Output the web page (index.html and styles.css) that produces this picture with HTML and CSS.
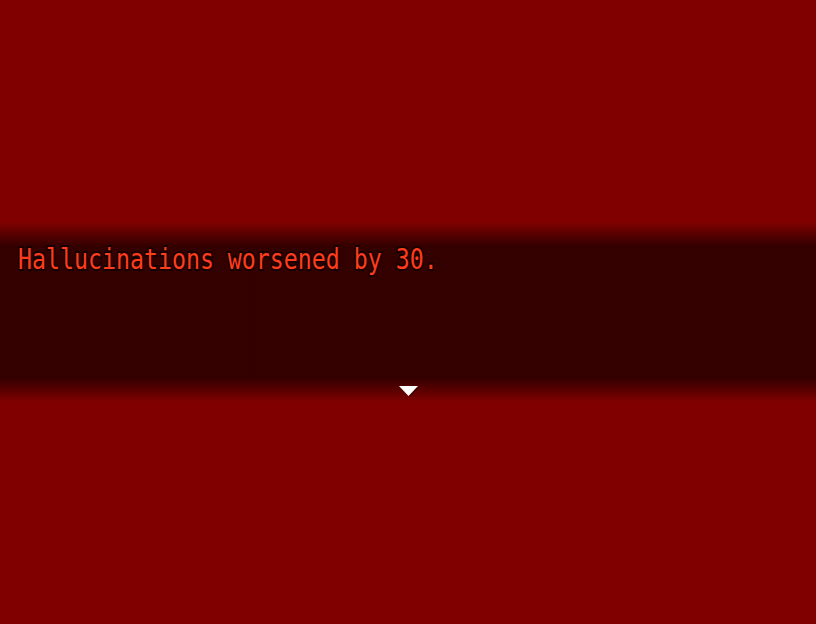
FILE: index.html
```html
<!DOCTYPE html>
<html>
<head>
<meta charset="utf-8">
<link rel="stylesheet" href="styles.css">
</head>
<body>
<div class="screen">
  <div class="message-window">
    <div class="message-text"><span class="line">Hallucinations worsened by 30.</span></div>
    <svg class="pause-sign" width="24" height="14" viewBox="0 0 24 14">
      <polygon points="3,2 22,2 13,12" fill="rgba(0,0,0,0.35)"/>
      <polygon points="2,1 21,1 11.5,11" fill="#ffffff"/>
    </svg>
  </div>
</div>
</body>
</html>
```
FILE: styles.css
```css
html, body {
  margin: 0;
  padding: 0;
}
body {
  width: 816px;
  height: 624px;
  overflow: hidden;
  background: #800000;
}
.screen {
  width: 816px;
  height: 624px;
  display: flex;
  flex-direction: column;
  justify-content: center;
}
.message-window {
  position: relative;
  height: 180px;
  box-sizing: border-box;
  padding: 20px 18px 18px;
  background: linear-gradient(to bottom,
    rgba(0,0,0,0) 0px,
    rgba(0,0,0,0.6) 24px,
    rgba(0,0,0,0.6) calc(100% - 24px),
    rgba(0,0,0,0) 100%);
}
.message-text {
  font-family: "DejaVu Sans Mono", monospace;
  font-size: 28px;
  line-height: 36px;
  color: #ff3c1c;
  white-space: pre;
}
.line {
  display: inline-block;
  transform: scaleX(0.83);
  transform-origin: 0 0;
  -webkit-text-stroke: 4px rgba(0,0,0,0.5);
  paint-order: stroke fill;
}
.pause-sign {
  position: absolute;
  left: 397px;
  top: 163px;
}
```
